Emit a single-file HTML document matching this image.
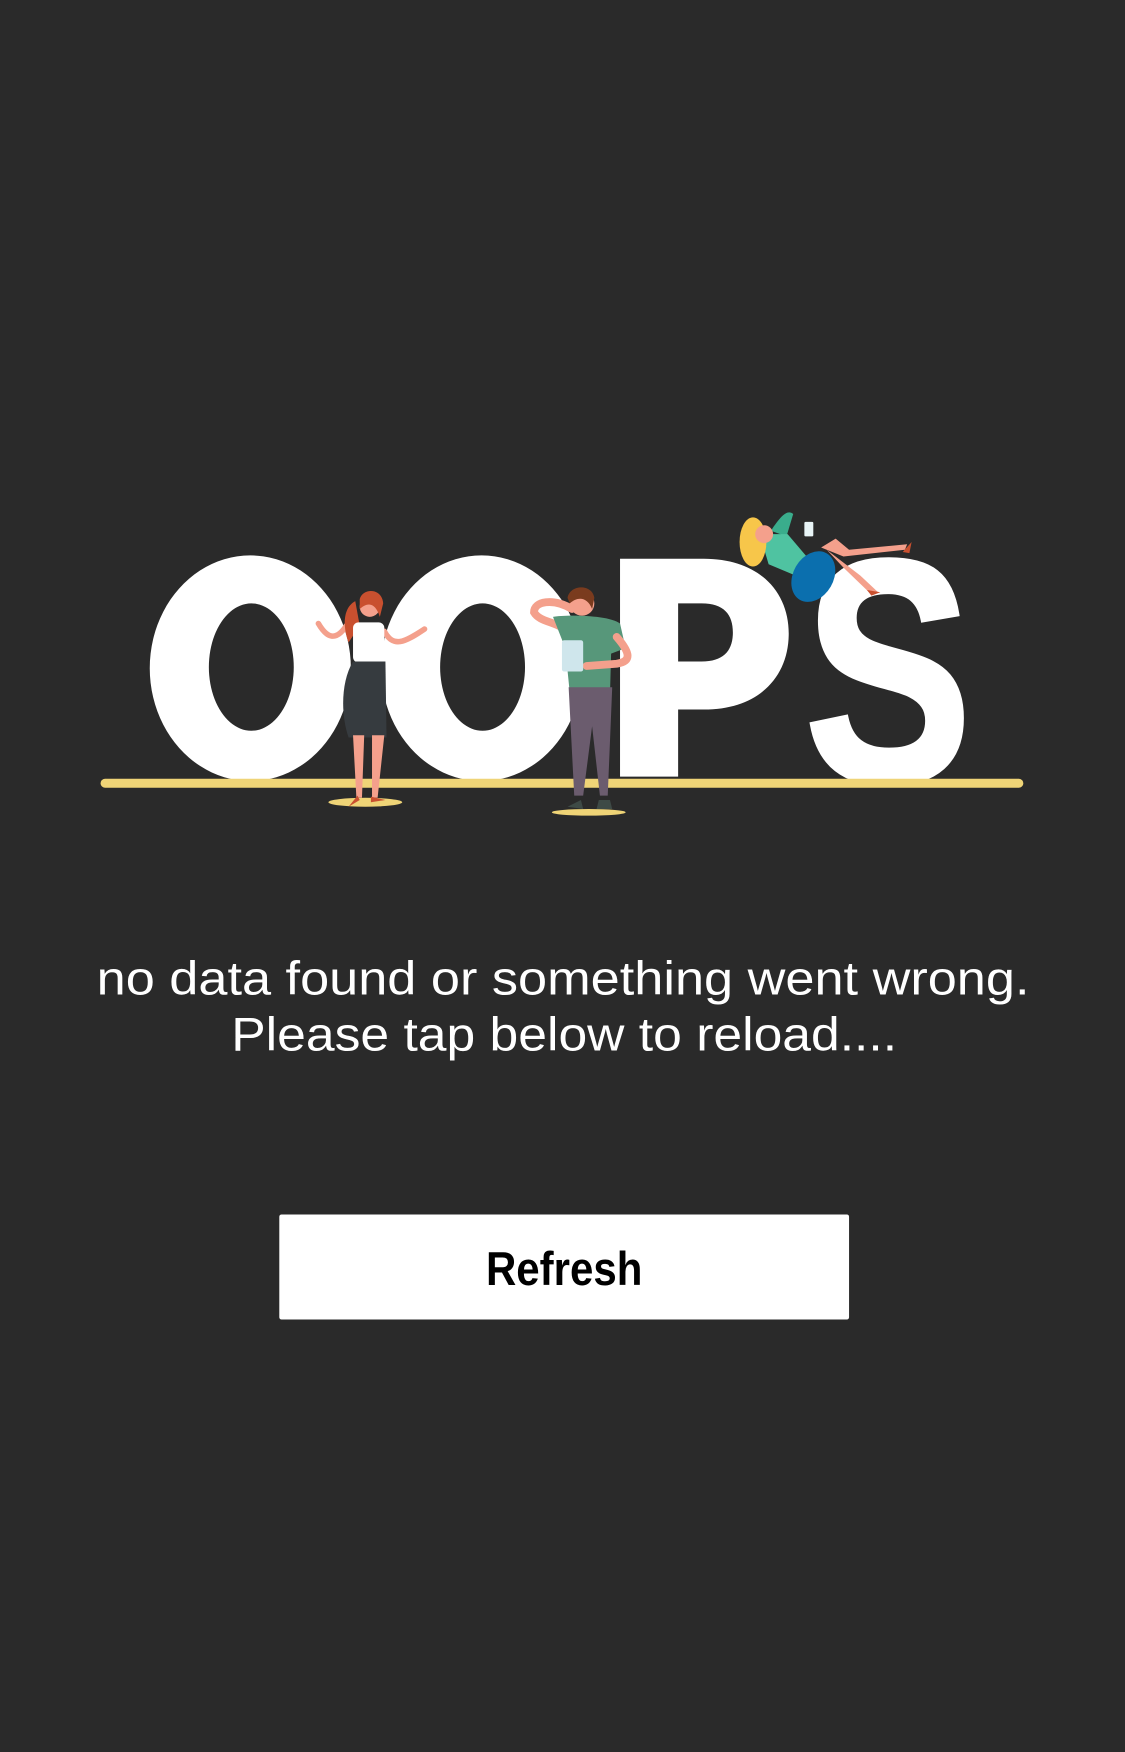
<!DOCTYPE html>
<html><head><meta charset="utf-8"><style>
html,body{margin:0;padding:0;background:#2a2a2a;width:1125px;height:1752px;overflow:hidden}
svg{display:block}
</style></head><body>
<svg width="1125" height="1752" viewBox="0 0 1007 1568" xmlns="http://www.w3.org/2000/svg">
<rect width="1007" height="1568" fill="#2a2a2a"/>
<path fill-rule="evenodd" fill="#fff" d="M224,497 a90,101 0 1,0 0.1,0 Z M225,540 a38,57 0 1,1 -0.1,0 Z"/>
<path fill-rule="evenodd" fill="#fff" d="M431,497 a90,101 0 1,0 0.1,0 Z M432,540 a38,57 0 1,1 -0.1,0 Z"/>
<path fill-rule="evenodd" fill="#fff" d="M555,500 H630 C680,500 706,530 706,567 C706,605 680,635 630,635 H607 V695 H555 Z M607,540 V592 H628 C648,592 656,582 656,566 C656,550 648,540 628,540 Z"/>
<text x="720" y="699" font-family="Liberation Sans, sans-serif" font-weight="bold" font-size="284" fill="#fff" stroke="#fff" stroke-width="4" textLength="150" lengthAdjust="spacingAndGlyphs">S</text>
<rect x="90" y="697" width="826" height="8" rx="4" fill="#efd477"/>
<ellipse cx="327" cy="718" rx="33" ry="4" fill="#efd477"/>
<path d="M310,560 C300,575 292,570 285,558" stroke="#f4a08c" stroke-width="5" fill="none" stroke-linecap="round"/>
<path d="M344,565 C352,580 362,575 380,563" stroke="#f4a08c" stroke-width="5" fill="none" stroke-linecap="round"/>
<path d="M318,538 C305,545 308,565 312,575 L322,560 Z" fill="#c9502f"/>
<circle cx="331" cy="543" r="9" fill="#f4a08c"/>
<path d="M322,536 C325,526 342,526 343,540 L340,552 C336,540 330,538 322,545 Z" fill="#c9502f"/>
<rect x="316" y="557" width="28" height="36" rx="5" fill="#fff"/>
<path d="M316,592 H345 L346,660 H312 C305,640 305,610 316,592 Z" fill="#363b3f"/>
<path d="M316,658 L319,714 L324,714 L326,658 Z M333,658 L333,714 L338,714 L344,658 Z" fill="#f4a08c"/>
<path d="M312,722 L320,712 L322,716 Z M332,713 L345,716 L332,718 Z" fill="#c9502f"/>
<ellipse cx="527" cy="727" rx="33" ry="3" fill="#efd477"/>
<path d="M512,545 C495,535 478,538 478,548 C482,555 492,556 500,560" stroke="#f4a08c" stroke-width="7" fill="none" stroke-linecap="round"/>
<circle cx="521" cy="540" r="11" fill="#f4a08c"/>
<path d="M508,535 C510,523 530,522 532,535 L530,545 C526,535 518,533 510,540 Z" fill="#7a3b1e"/>
<path d="M495,552 C505,550 545,550 555,558 L560,580 L547,585 L546,622 C535,628 515,626 510,620 L506,580 Z" fill="#57977a"/>
<path d="M552,570 C565,585 565,592 552,594 L525,596" stroke="#f4a08c" stroke-width="7" fill="none" stroke-linecap="round"/>
<rect x="503" y="573" width="19" height="28" rx="2" fill="#cfe6ec"/>
<path d="M509,615 H548 L544,712 L537,712 L530,650 L522,712 L514,712 Z" fill="#6b5c6e"/>
<path d="M508,722 L520,716 L522,724 Z M536,716 L546,716 L548,724 L534,724 Z" fill="#3e4a46"/>
<path d="M690,475 C700,460 705,456 710,460 L704,480 Z" fill="#3aad8c"/>
<path d="M680,478 L705,478 L722,498 L712,515 L688,505 Z" fill="#4fc3a1"/>
<ellipse cx="728" cy="516" rx="18" ry="24" transform="rotate(30 728 516)" fill="#0b6fae"/>
<path d="M735,490 L755,498 L810,492 L812,487 L760,492 L748,482 Z" fill="#f4a08c"/>
<path d="M740,492 L770,515 L786,530 L780,532 L755,508 Z" fill="#f4a08c"/>
<path d="M808,494 L816,485 L814,495 Z M776,528 L788,530 L780,533 Z" fill="#c9502f"/>
<ellipse cx="674" cy="485" rx="12" ry="22" fill="#f7c64a"/>
<circle cx="684" cy="478" r="8" fill="#f4a08c"/>
<rect x="720" y="467" width="8" height="13" rx="1" fill="#e8f4f6"/>
<text x="504" y="890" text-anchor="middle" font-family="Liberation Sans, sans-serif" font-size="42" fill="#fff" textLength="835" lengthAdjust="spacingAndGlyphs">no data found or something went wrong.</text>
<text x="505" y="940" text-anchor="middle" font-family="Liberation Sans, sans-serif" font-size="42" fill="#fff" textLength="596" lengthAdjust="spacingAndGlyphs">Please tap below to reload....</text>
<rect x="250" y="1087" width="510" height="94" rx="2" fill="#fff"/>
<text x="505" y="1150" text-anchor="middle" font-family="Liberation Sans, sans-serif" font-weight="bold" font-size="42" fill="#000" textLength="140" lengthAdjust="spacingAndGlyphs">Refresh</text>
</svg>
</body></html>
